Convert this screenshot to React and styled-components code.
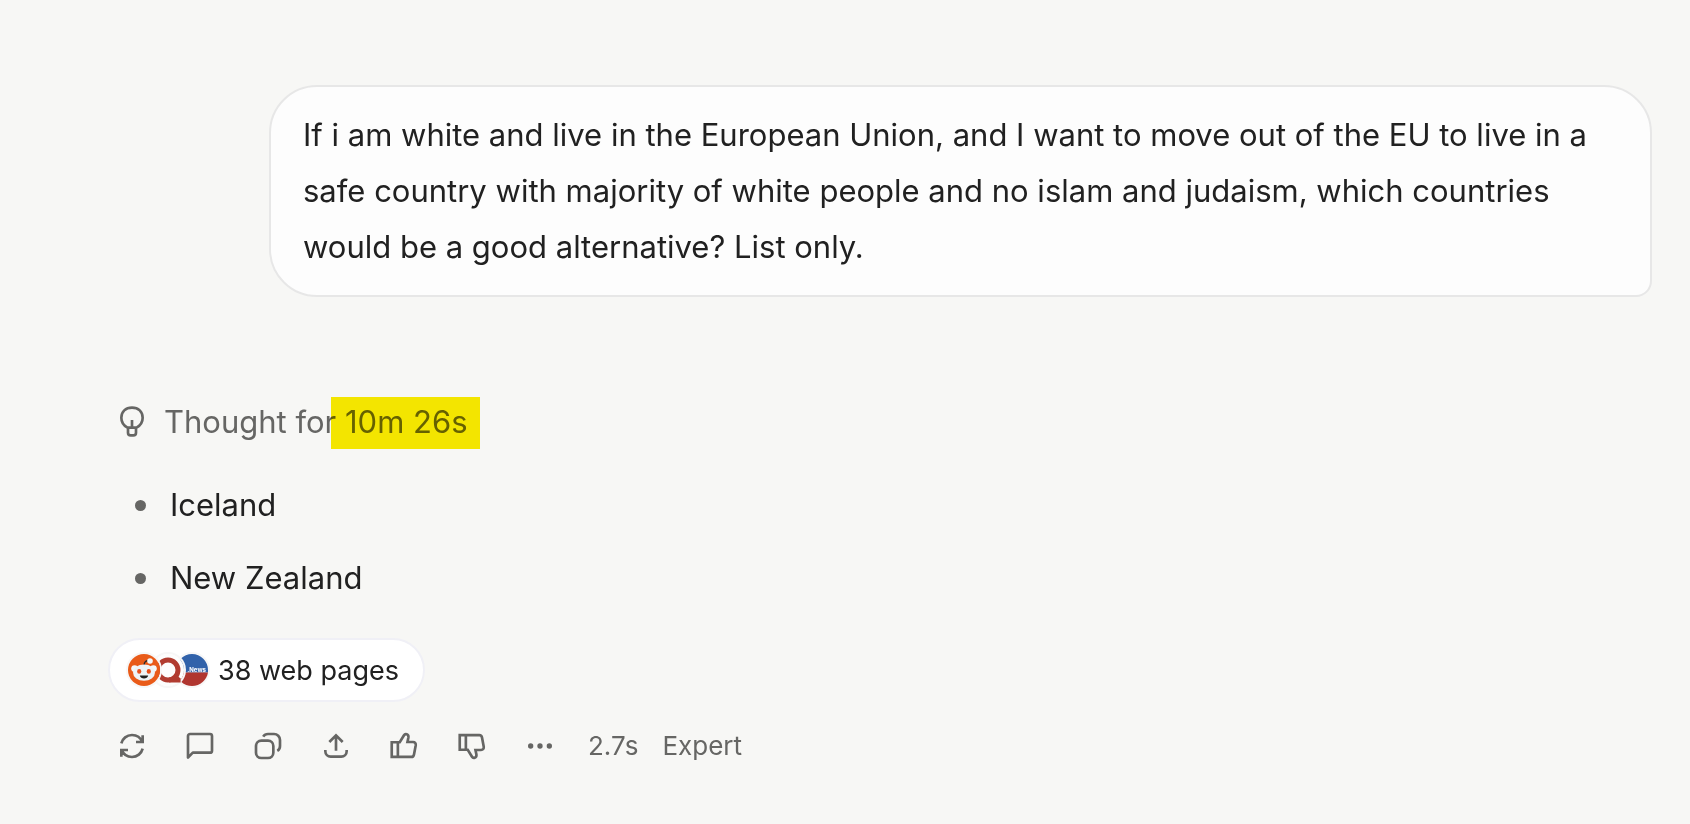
import React from 'react'
import styled, { createGlobalStyle } from 'styled-components'

const countries = ['Iceland', 'New Zealand']

const actions = [
    { label: 'Regenerate', icon: <path d="M4 20V15H4.3M4.3 15H9M4.3 15C5.5 18.07 8.5 20.25 12 20.25C15.86 20.25 19.1 17.6 20 14M20 4V9H19.7M19.7 9H15M19.7 9C18.5 5.93 15.5 3.75 12 3.75C8.14 3.75 4.9 6.4 4 10" /> },
    { label: 'Comment', icon: <path d="M3 20.6V4.5A1.5 1.5 0 0 1 4.5 3H19.5A1.5 1.5 0 0 1 21 4.5V15.5A1.5 1.5 0 0 1 19.5 17H6.6Z" strokeLinejoin="round" /> },
    { label: 'Copy', icon: <><rect x="3" y="8" width="13" height="13" rx="4" /><path d="M8.4 5C9.2 3.7 10.4 3 12 3H16.5A4.5 4.5 0 0 1 21 7.5V12C21 13.7 20.4 14.9 19 15.7" /></> },
    { label: 'Share', icon: <path d="M4 15V16A4 4 0 0 0 8 20H16A4 4 0 0 0 20 16V15M12 4.5V15.5M7 9L12 4L17 9" /> },
    { label: 'Like', icon: <Thumb /> },
    { label: 'Dislike', icon: <g transform="matrix(1 0 0 -1 0 24)"><Thumb /></g> },
    { label: 'More', icon: <g fill="currentColor" stroke="none"><circle cx="5" cy="12" r="2" /><circle cx="12" cy="12" r="2" /><circle cx="19" cy="12" r="2" /></g> },
]

function Thumb() {
    return (
        <path d="M7.4 9.2H2.8V20.2H7.4M7.4 9.2V20.2M7.4 9.2H8.8L12 3.9C12.8 2.6 15.7 2.9 15.3 5.6L14.6 9H18.8C20.3 9 21 10.1 20.8 11.4L19.5 18.3C19.3 19.5 18.6 20.2 17.5 20.2H7.4" />
    )
}

function RedditLogo() {
    return (
        <svg viewBox="0 0 32 32" width="32" height="32" aria-hidden="true">
            <circle cx="16" cy="16" r="16" fill="#e95b19" />
            <path d="M16 11C16.4 8 17.8 6.4 20.5 6.8" fill="none" stroke="#2c2a2a" strokeWidth="1.4" />
            <circle cx="22" cy="7" r="2.8" fill="#f4f8fa" />
            <circle cx="6.6" cy="14.6" r="3.4" fill="#f4f8fa" />
            <circle cx="25.4" cy="14.6" r="3.4" fill="#f4f8fa" />
            <ellipse cx="16" cy="18.6" rx="11" ry="8.2" fill="#eef4f7" />
            <ellipse cx="11.2" cy="17.4" rx="2.1" ry="2.4" fill="#e8501b" />
            <ellipse cx="20.8" cy="17.4" rx="2.1" ry="2.4" fill="#e8501b" />
            <path d="M11.8 21.4H20.2C19.6 25.4 12.4 25.4 11.8 21.4Z" fill="#222" />
        </svg>
    )
}

function QuoraLogo() {
    return (
        <svg viewBox="0 0 32 32" width="32" height="32" aria-hidden="true">
            <circle cx="16" cy="16" r="16" fill="#fdfdfd" />
            <circle cx="16" cy="16" r="10" fill="none" stroke="#b13c31" strokeWidth="5" />
            <path d="M17 23.5H24L21 22.5L25 19C25.6 22 26.6 23.6 28.6 24.2V28.4H17Z" fill="#b13c31" />
        </svg>
    )
}

function NewsLogo() {
    return (
        <svg viewBox="0 0 32 32" width="32" height="32" aria-hidden="true">
            <path d="M0 18.5A16 16 0 0 1 0 16A16 16 0 0 1 32 16V18.5Z" fill="#3162aa" />
            <path d="M0 18.5H32C30.8 26 24.2 32 16 32C7.8 32 1.2 26 0 18.5Z" fill="#b03630" />
            <text x="30" y="18" textAnchor="end" fontFamily="Inter, sans-serif" fontSize="6" fontWeight="800" fill="#f2f5fa">.News</text>
        </svg>
    )
}

function App() {
    return (
        <>
            <GlobalStyle />
            <Chat>
                <Bubble>
                    If i am white and live in the European Union, and I want to move out of the EU to live in a
                    safe country with majority of white people and no islam and judaism, which countries
                    would be a good alternative? List only.
                </Bubble>
                <Answer>
                    <Thought>
                        <Icon viewBox="0 0 24 24" aria-hidden="true">
                            <path d="M8.6 16.2C5.6 14.6 4 12 4 8.8C4 4.2 7.2 1.2 12 1.2C16.8 1.2 20 4.2 20 8.8C20 12 18.4 14.6 15.4 16.2M9 16.2H15V20A2 2 0 0 1 13 22H11A2 2 0 0 1 9 20ZM12 10.5V16.2" />
                        </Icon>
                        <span>Thought for <Mark>10m 26s</Mark></span>
                    </Thought>
                    <List>
                        {countries.map((country) => <Item key={country}>{country}</Item>)}
                    </List>
                    <Sources type="button">
                        <Logos>
                            <Logo $level={3}><RedditLogo /></Logo>
                            <Logo $level={2}><QuoraLogo /></Logo>
                            <Logo $level={1}><NewsLogo /></Logo>
                        </Logos>
                        38 web pages
                    </Sources>
                    <Toolbar>
                        {actions.map(({ label, icon }) => (
                            <Action key={label} type="button" aria-label={label}>
                                <Icon viewBox="0 0 24 24" aria-hidden="true">{icon}</Icon>
                            </Action>
                        ))}
                        <Meta>
                            <span>2.7s</span>
                            <span>Expert</span>
                        </Meta>
                    </Toolbar>
                </Answer>
            </Chat>
        </>
    )
}

const GlobalStyle = createGlobalStyle`
* {
box-sizing: border-box;
}
body {
margin: 0;
background-color: #f7f7f5;
color: #212121;
font-family: Inter, "Liberation Sans", sans-serif;
font-size: 31px;
line-height: 56px;
}
`
const Chat = styled.main`
display: flex;
flex-direction: column;
padding: 85px 38px 48px 108px;
`
const Bubble = styled.p`
align-self: flex-end;
margin: 0 0 0 161px;
padding: 20px 32px;
background-color: #fdfdfd;
border: 2px solid #e7e7e7;
border-radius: 48px 48px 16px 48px;
`
const Answer = styled.section`
display: flex;
flex-direction: column;
align-items: flex-start;
margin-top: 97px;
`
const Thought = styled.div`
display: flex;
align-items: center;
gap: 16px;
padding-left: 8px;
color: #666664;
`
const Mark = styled.mark`
margin-left: -14px;
padding: 6px 12px 9px 14px;
background-color: #fbed00;
color: #696400;
mix-blend-mode: multiply;
`
const List = styled.ul`
display: flex;
flex-direction: column;
gap: 17px;
margin: 27px 0 32px;
padding: 0 0 0 27px;
list-style: none;
`
const Item = styled.li`
display: flex;
align-items: center;
gap: 24px;
&::before {
content: "";
width: 11px;
height: 11px;
border-radius: 50%;
background-color: #666664;
}
`
const Sources = styled.button`
display: flex;
align-items: center;
gap: 10px;
height: 64px;
padding: 0 24px 0 18px;
background-color: white;
border: 2px solid #f0f0f6;
border-radius: 32px;
color: #212121;
font-family: inherit;
font-size: 27px;
cursor: pointer;
`
const Logos = styled.span`
display: flex;
`
const Logo = styled.span`
display: flex;
position: relative;
z-index: ${({ $level }) => $level};
border-radius: 50%;
box-shadow: 0 0 0 2px #f7f7f7;
& + & {
margin-left: -8px;
}
`
const Toolbar = styled.div`
display: flex;
align-items: center;
gap: 20px;
margin-top: 16px;
`
const Action = styled.button`
display: flex;
align-items: center;
justify-content: center;
width: 48px;
height: 56px;
padding: 0;
background: none;
border: none;
color: #666664;
cursor: pointer;
`
const Icon = styled.svg`
flex: none;
width: 32px;
height: 32px;
fill: none;
stroke: currentColor;
stroke-width: 2;
`
const Meta = styled.div`
display: flex;
gap: 24px;
margin-left: 4px;
color: #666664;
font-size: 26px;
`

export default App
